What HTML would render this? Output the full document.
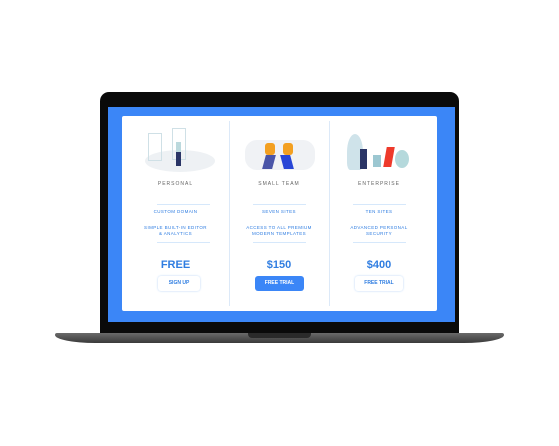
<html><head><style>
body{margin:0;width:559px;height:446px;background:#fff;position:relative;overflow:hidden;font-family:"Liberation Sans",sans-serif}
.a{position:absolute}
.col{position:absolute;top:116px;width:100px;height:195px;text-align:center}
.t{position:absolute;left:0;right:0;top:181px;font-size:5px;letter-spacing:1px;color:#666}
.ln{position:absolute;left:23px;width:53px;height:1px;background:#d6e8fb}
.f{position:absolute;left:0;right:0;font-size:4.5px;color:#2f7de1;letter-spacing:.4px;line-height:6px}
.p{position:absolute;left:0;right:0;top:259px;font-size:11px;font-weight:bold;color:#2f7de1}
.b{position:absolute;top:276px;height:15px;border-radius:3px;font-size:5px;font-weight:bold;color:#2f7de1;line-height:15px;box-shadow:0 0 2px #b9d4f7;box-sizing:border-box}
</style></head><body>
<div class="a" style="left:100px;top:92px;width:359px;height:242px;background:#0a0a0a;border-radius:9px 9px 0 0"></div>
<div class="a" style="left:108px;top:107px;width:347px;height:215px;background:#3b86f7"></div>
<div class="a" style="left:122px;top:116px;width:315px;height:195px;background:#fff;border-radius:2px"></div>
<div class="a" style="left:229px;top:121px;width:1px;height:185px;background:#dce9f8"></div>
<div class="a" style="left:329px;top:121px;width:1px;height:185px;background:#dce9f8"></div>
<div class="a" style="left:55px;top:333px;width:449px;height:10px;background:linear-gradient(#6a6a6a,#3a3a3a);border-radius:2px 2px 40px 40px/2px 2px 8px 8px"></div>
<div class="a" style="left:248px;top:333px;width:63px;height:5px;background:#2a2a2a;border-radius:0 0 4px 4px"></div>
<div class="a" style="left:145px;top:150px;width:70px;height:22px;border-radius:50%;background:#eef1f4"></div>
<div class="a" style="left:148px;top:133px;width:12px;height:26px;border:1px solid #cfe0e6"></div>
<div class="a" style="left:172px;top:128px;width:12px;height:30px;border:1px solid #cfe0e6"></div>
<div class="a" style="left:176px;top:142px;width:5px;height:10px;background:#bcd9dd"></div>
<div class="a" style="left:176px;top:152px;width:5px;height:14px;background:#2a3566"></div>
<div class="a" style="left:245px;top:140px;width:70px;height:30px;border-radius:12px;background:#f0f2f5"></div>
<div class="a" style="left:265px;top:143px;width:10px;height:12px;background:#f3a021;border-radius:3px"></div>
<div class="a" style="left:264px;top:155px;width:10px;height:14px;background:#4a55a8;transform:skewX(-15deg)"></div>
<div class="a" style="left:283px;top:143px;width:10px;height:12px;background:#f3a021;border-radius:3px"></div>
<div class="a" style="left:282px;top:155px;width:10px;height:14px;background:#2846d6;transform:skewX(15deg)"></div>
<div class="a" style="left:347px;top:134px;width:16px;height:36px;background:#cfe3ea;border-radius:50% 50% 20% 20%"></div>
<div class="a" style="left:395px;top:150px;width:14px;height:18px;background:#b5d9dc;border-radius:50%"></div>
<div class="a" style="left:360px;top:149px;width:7px;height:20px;background:#2a3566"></div>
<div class="a" style="left:373px;top:155px;width:8px;height:12px;background:#9cc7d1"></div>
<div class="a" style="left:385px;top:147px;width:8px;height:20px;background:#ee3a2b;transform:skewX(-10deg)"></div>
<div class="col" style="left:122px;width:107px;top:0"><div class="t">PERSONAL</div><div class="ln" style="top:204px;left:35px;width:53px"></div><div class="f" style="top:209px">CUSTOM DOMAIN</div><div class="f" style="top:225px">SIMPLE BUILT-IN EDITOR<br>& ANALYTICS</div><div class="ln" style="top:242px;left:35px"></div><div class="p">FREE</div><div class="b" style="left:36px;width:42px">SIGN UP</div></div>
<div class="col" style="left:229px;width:100px;top:0"><div class="t">SMALL TEAM</div><div class="ln" style="top:204px;left:24px"></div><div class="f" style="top:209px">SEVEN SITES</div><div class="f" style="top:225px">ACCESS TO ALL PREMIUM<br>MODERN TEMPLATES</div><div class="ln" style="top:242px;left:24px"></div><div class="p">$150</div><div class="b" style="left:26px;width:49px;background:#3b86f7;color:#fff;box-shadow:none">FREE TRIAL</div></div>
<div class="col" style="left:329px;width:100px;top:0"><div class="t">ENTERPRISE</div><div class="ln" style="top:204px;left:24px"></div><div class="f" style="top:209px">TEN SITES</div><div class="f" style="top:225px">ADVANCED PERSONAL<br>SECURITY</div><div class="ln" style="top:242px;left:24px"></div><div class="p">$400</div><div class="b" style="left:26px;width:48px">FREE TRIAL</div></div>
</body></html>
